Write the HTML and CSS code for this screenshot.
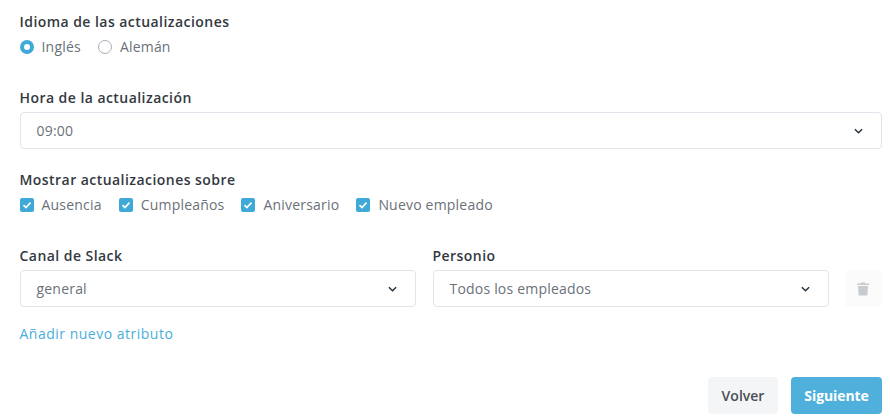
FILE: index.html
```html
<!DOCTYPE html>
<html lang="es">
<head>
    <meta charset="UTF-8">
    <title>Actualizaciones</title>
    <link rel="stylesheet" href="styles.css">
</head>
<body>
    <div class="form">
        <div class="group group-language">
            <div class="label">Idioma de las actualizaciones</div>
            <div class="options">
                <span class="option"><span class="radio radio-on"></span>Inglés</span>
                <span class="option"><span class="radio"></span>Alemán</span>
            </div>
        </div>

        <div class="group group-time">
            <div class="label">Hora de la actualización</div>
            <div class="select">
                <span>09:00</span>
                <svg class="chevron" viewBox="0 0 10 6"><path d="M1 1l4 4 4-4" fill="none" stroke="#27313b" stroke-width="1.6"/></svg>
            </div>
        </div>

        <div class="group group-topics">
            <div class="label">Mostrar actualizaciones sobre</div>
            <div class="options options-checks">
                <span class="option"><span class="check"><svg viewBox="0 0 14 14"><path d="M3.5 7.200l2.400 2.300 4.600-4.800" fill="none" stroke="#fff" stroke-width="1.700"/></svg></span>Ausencia</span>
                <span class="option"><span class="check"><svg viewBox="0 0 14 14"><path d="M3.5 7.200l2.400 2.300 4.600-4.800" fill="none" stroke="#fff" stroke-width="1.700"/></svg></span>Cumpleaños</span>
                <span class="option"><span class="check"><svg viewBox="0 0 14 14"><path d="M3.5 7.200l2.400 2.300 4.600-4.800" fill="none" stroke="#fff" stroke-width="1.700"/></svg></span>Aniversario</span>
                <span class="option"><span class="check"><svg viewBox="0 0 14 14"><path d="M3.5 7.200l2.400 2.300 4.600-4.800" fill="none" stroke="#fff" stroke-width="1.700"/></svg></span>Nuevo empleado</span>
            </div>
        </div>

        <div class="mapping">
            <div class="mapping-col">
                <div class="label">Canal de Slack</div>
                <div class="select">
                    <span>general</span>
                    <svg class="chevron" viewBox="0 0 10 6"><path d="M1 1l4 4 4-4" fill="none" stroke="#27313b" stroke-width="1.6"/></svg>
                </div>
            </div>
            <div class="mapping-col">
                <div class="label">Personio</div>
                <div class="select">
                    <span>Todos los empleados</span>
                    <svg class="chevron" viewBox="0 0 10 6"><path d="M1 1l4 4 4-4" fill="none" stroke="#27313b" stroke-width="1.6"/></svg>
                </div>
            </div>
            <div class="trash">
                <svg viewBox="0 0 12 14"><path d="M4 0.5h4l.5 1H12v1.500H0V1.500h3.500zM1 4h10l-.7 9.500H1.700z" fill="#c9cccf"/></svg>
            </div>
        </div>

        <a class="add-link" href="#">Añadir nuevo atributo</a>

        <div class="actions">
            <button class="btn btn-back">Volver</button>
            <button class="btn btn-next">Siguiente</button>
        </div>
    </div>
</body>
</html>
```

FILE: styles.css
```css
* {
    margin: 0;
    padding: 0;
    box-sizing: border-box;
}

body {
    font-family: 'Open Sans', 'Noto Sans', sans-serif;
    font-size: 14px;
    color: #6b7178;
    background: #fff;
}

.form {
    padding: 13px 8px 0 19.5px;
}

.label {
    font-size: 14px;
    font-weight: 600;
    line-height: 18px;
    color: #33393f;
    letter-spacing: 0.45px;
}

.group-time {
    margin-top: 33px;
}

.group-topics {
    margin-top: 22px;
}

.options {
    display: flex;
    gap: 17px;
    margin-top: 7px;
    line-height: 18px;
}

.option {
    display: flex;
    align-items: center;
    letter-spacing: 0.2px;
}

.radio {
    width: 14px;
    height: 14px;
    margin-right: 8px;
    border: 1px solid #a9afb5;
    border-radius: 50%;
}

.radio-on {
    border: 4px solid #3fa9d8;
}

.check {
    width: 14px;
    height: 14px;
    margin-right: 8px;
    background: #3fa9d8;
    border-radius: 2px;
}

.check svg {
    display: block;
    width: 14px;
    height: 14px;
}

.select {
    display: flex;
    align-items: center;
    justify-content: space-between;
    height: 37px;
    margin-top: 5px;
    padding: 0 18px 0 16px;
    background: #fff;
    border: 1px solid #dfe5ea;
    border-radius: 4px;
    letter-spacing: 0.2px;
}

.chevron {
    width: 9px;
    height: 6px;
}

.mapping {
    display: flex;
    align-items: flex-end;
    gap: 17px;
    margin-top: 33px;
}

.mapping-col {
    width: 396px;
}

.trash {
    display: flex;
    align-items: center;
    justify-content: center;
    width: 37px;
    height: 37px;
    margin-left: -1px;
    background: #fbfbfc;
    border-radius: 4px;
}

.trash svg {
    width: 12px;
    height: 14px;
}

.add-link {
    display: inline-block;
    margin-top: 18px;
    line-height: 18px;
    color: #4aaedb;
    text-decoration: none;
    letter-spacing: 0.5px;
}

.actions {
    display: flex;
    justify-content: flex-end;
    gap: 13px;
    margin-top: 34px;
}

.btn {
    height: 37px;
    border-radius: 4px;
    border: none;
    font-family: inherit;
    font-size: 14px;
    font-weight: 600;
}

.btn-back {
    width: 70px;
    background: #f4f5f7;
    color: #4a4f55;
}

.btn-next {
    width: 91px;
    background: #4fb0dc;
    color: #fff;
    font-weight: 700;
    letter-spacing: -0.1px;
}
```
